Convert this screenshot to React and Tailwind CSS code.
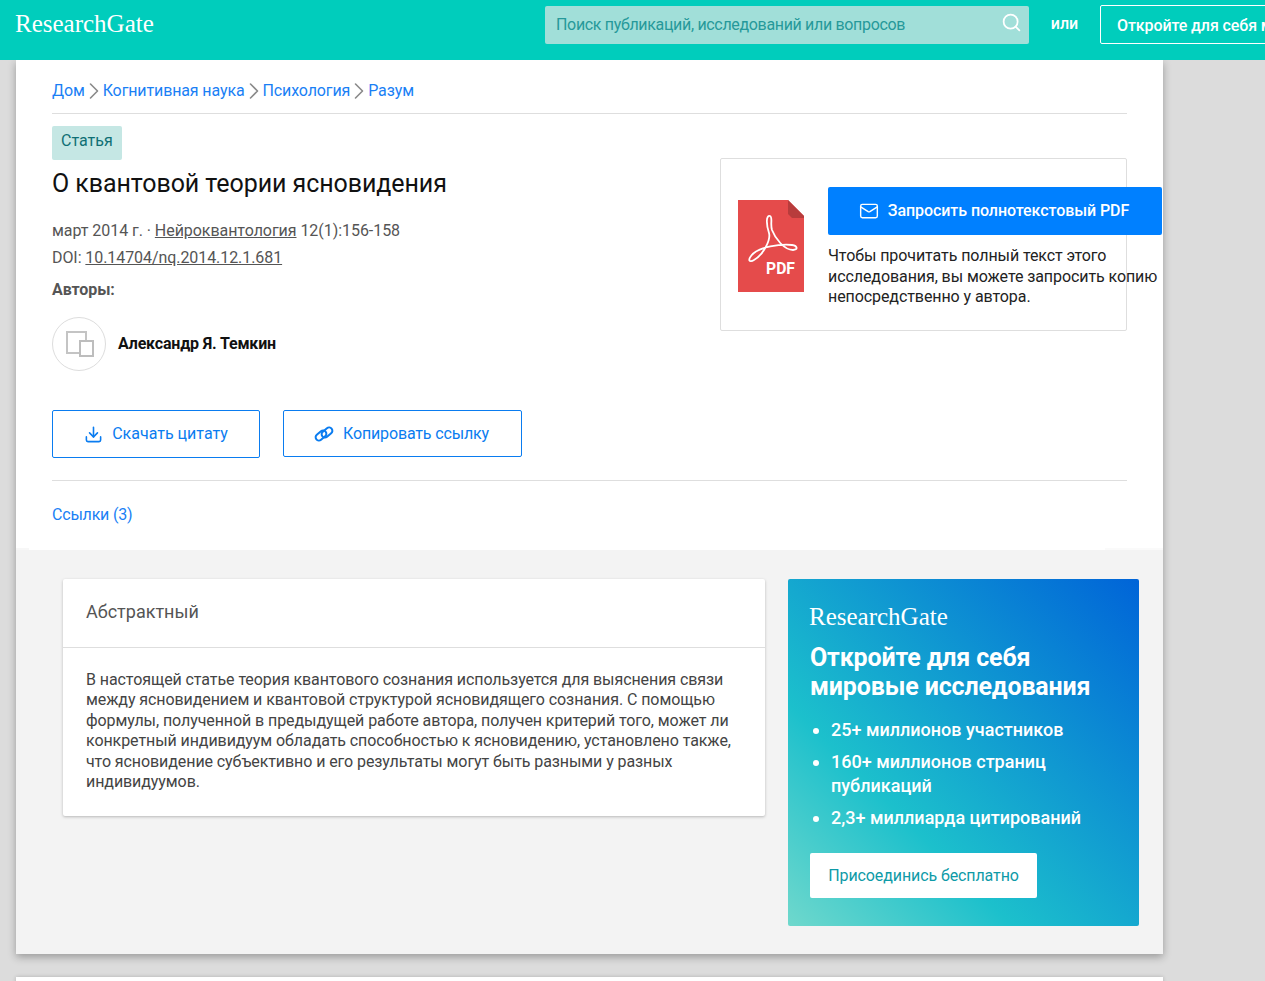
import React from 'react'
import { ChevronRight, Download, Mail, Search } from 'lucide-react'

const crumbs = ['Дом', 'Когнитивная наука', 'Психология', 'Разум']

function PdfIcon() {
  return (
    <svg viewBox="0 0 66 92" className="w-[66px] h-[92px] shrink-0">
      <path d="M0 0H50L66 16V92H0Z" fill="#e54b4b" />
      <path d="M50 0L66 16V18H54L50 14Z" fill="#b83c3c" />
      <path
        d="M32 16C28 15 28 24 31 33C33 40 25 55 16 60C11 63 10 60 13 56C20 46 44 44 54 45C60 46 60 50 55 50C46 50 37 38 34 30C32 24 35 17 32 16Z"
        fill="none"
        stroke="#fff"
        strokeWidth="1.8"
      />
      <text x="28" y="74" fill="#fff" fontSize="17" fontWeight="700" fontFamily="Roboto, sans-serif" textLength="29" lengthAdjust="spacingAndGlyphs">PDF</text>
    </svg>
  )
}

function LinkIcon() {
  return (
    <svg viewBox="0 0 20 20" className="w-5 h-5" fill="none" stroke="#0a7cf0" strokeWidth="2">
      <rect x="1" y="8.2" width="12" height="6.6" rx="3.3" transform="rotate(-40 7 11.5)" />
      <rect x="7" y="5.2" width="12" height="6.6" rx="3.3" transform="rotate(-40 13 8.5)" />
    </svg>
  )
}

function Logo({ className }) {
  return <span className={`font-['Liberation_Serif',serif] text-white ${className}`}>ResearchGate</span>
}

function Header() {
  return (
    <header className="h-[60px] bg-[#00cdbc] flex overflow-hidden relative z-10">
      <div className="w-[545px] shrink-0 pl-[15px] pt-[7px]">
        <Logo className="text-[25px] leading-[34px]" />
      </div>
      <div className="mt-[6px] h-[38px] w-[484px] shrink-0 rounded-[2px] bg-[#a1dfd9] flex items-center justify-between pl-[11px] pr-[7px]">
        <span className="text-[16px] tracking-[-0.33px] text-[#26999a]">Поиск публикаций, исследований или вопросов</span>
        <Search className="w-[21px] h-[21px] -mt-[6px] text-white" strokeWidth={2} />
      </div>
      <span className="w-[71px] shrink-0 pt-[13px] text-center text-[16px] leading-[22px] font-medium text-white">или</span>
      <div className="mt-[5px] h-[39px] w-[260px] shrink-0 rounded-[2px] border border-white pl-[16px] text-[16px] leading-[39px] tracking-[-0.1px] font-medium text-white whitespace-nowrap">
        Откройте для себя мировые
      </div>
    </header>
  )
}

function TopSection() {
  return (
    <section className="relative bg-white px-9 h-[490px]">
      <nav className="pt-[19px] pb-[10px] border-b border-[#dedede] flex items-center text-[16px] leading-6 tracking-[-0.12px] text-[#1a7ff5]">
        {crumbs.map((crumb, index) => (
          <React.Fragment key={crumb}>
            {index > 0 && <ChevronRight className="w-7 h-7 -mx-[5px] -my-[2px] text-[#8a8a8a]" strokeWidth={1.4} />}
            <span>{crumb}</span>
          </React.Fragment>
        ))}
      </nav>

      <div className="flex justify-between h-[367px] border-b border-[#dedede]">
        <div>
          <div className="mt-3 w-[70px] h-[34px] rounded-[2px] bg-[#c5e7e4] pl-[9px] text-[16px] leading-[29px] text-[#0f6f74]">
            Статья
          </div>
          <h1 className="mt-[6px] text-[25px] leading-[36px] tracking-[-0.07px] text-[#111]">О квантовой теории ясновидения</h1>
          <p className="mt-[15px] text-[16px] leading-[27px] tracking-[-0.05px] text-[#555]">
            март 2014 г. · <span className="underline">Нейроквантология</span> 12(1):156-158
          </p>
          <p className="text-[16px] leading-[27px] tracking-[-0.07px] text-[#555]">
            DOI: <span className="underline">10.14704/nq.2014.12.1.681</span>
          </p>
          <p className="mt-[5px] text-[16px] leading-[27px] font-bold tracking-[-0.1px] text-[#555]">Авторы:</p>
          <div className="mt-[14px] flex items-center gap-3">
            <div className="w-[54px] h-[54px] rounded-full border border-[#dddddd] relative">
              <div className="absolute left-[13px] top-[13px] w-[21px] h-[23px] border-2 border-[#c4c4c4]" />
              <div className="absolute left-[26px] top-[22px] w-[15px] h-[17px] border-2 border-[#bdbdbd] bg-white" />
            </div>
            <span className="text-[16px] font-bold tracking-[-0.17px] text-[#111]">Александр Я. Темкин</span>
          </div>
          <div className="mt-[39px] flex gap-[23px] items-start">
            <button className="w-[208px] h-[48px] rounded-[2px] border border-[#0a7cf0] flex items-center justify-center gap-[9px] text-[16px] text-[#0a7cf0]">
              <Download className="w-[19px] h-[19px]" strokeWidth={2} />
              Скачать цитату
            </button>
            <button className="w-[239px] h-[47px] rounded-[2px] border border-[#0a7cf0] flex items-center justify-center gap-[9px] pr-[2px] text-[16px] tracking-[-0.15px] text-[#0a7cf0]">
              <LinkIcon />
              Копировать ссылку
            </button>
          </div>
        </div>

        <div className="mt-[44px] w-[407px] h-[173px] rounded-[2px] border border-[#dedede] flex items-start gap-6 pl-[17px]">
          <div className="mt-[41px]">
            <PdfIcon />
          </div>
          <div className="w-[334px] shrink-0 mt-[28px]">
            <button className="w-[334px] h-[48px] rounded-[2px] bg-[#0080ff] flex items-center justify-center gap-[9px] pr-[2px] text-[16px] tracking-[-0.07px] font-medium text-white">
              <Mail className="w-[20px] h-[20px]" strokeWidth={1.7} />
              Запросить полнотекстовый PDF
            </button>
            <p className="mt-[11px] text-[16px] leading-[20.5px] tracking-[-0.08px] text-[#222]">
              Чтобы прочитать полный текст этого исследования, вы можете запросить копию непосредственно у автора.
            </p>
          </div>
        </div>
      </div>

      <p className="pt-[22px] text-[16px] leading-6 tracking-[-0.2px] text-[#1a7ff5]">Ссылки (3)</p>

      <div className="absolute left-0 bottom-0 w-[13px] h-[2px] bg-[#f7f7f7]" />
      <div className="absolute right-0 bottom-0 w-[58px] h-[2px] bg-[#fafafa]" />
    </section>
  )
}

function AbstractCard() {
  return (
    <div className="w-[702px] h-[237px] bg-white rounded-[2px] shadow-[0_1px_3px_rgba(0,0,0,0.25)]">
      <h2 className="h-[69px] border-b border-[#dedede] pl-[23px] pt-[19px] text-[18px] leading-[28px] text-[#555]">Абстрактный</h2>
      <p className="pt-[22px] px-[23px] text-[16px] leading-[20.4px] tracking-[-0.08px] text-[#444]">
        В настоящей статье теория квантового сознания используется для выяснения связи между ясновидением и квантовой структурой ясновидящего сознания. С помощью формулы, полученной в предыдущей работе автора, получен критерий того, может ли конкретный индивидуум обладать способностью к ясновидению, установлено также, что ясновидение субъективно и его результаты могут быть разными у разных индивидуумов.
      </p>
    </div>
  )
}

function PromoCard() {
  return (
    <div className="w-[351px] h-[347px] rounded-[2px] bg-[linear-gradient(to_top_right,#6fd8cc_0%,#1cc0cc_32%,#0064d8_100%)] pl-[22px] pt-[22px] text-white">
      <Logo className="block -ml-px text-[25px] leading-[32px]" />
      <h3 className="mt-[10px] text-[25px] leading-[29px] font-bold tracking-[-0.15px]">Откройте для себя<br />мировые исследования</h3>
      <ul className="mt-[17px] ml-[21px] w-[290px] list-disc text-[18px] leading-[24px] font-medium">
        <li>25+ миллионов участников</li>
        <li className="mt-2">160+ миллионов страниц публикаций</li>
        <li className="mt-2">2,3+ миллиарда цитирований</li>
      </ul>
      <button className="mt-[23px] w-[227px] h-[45px] rounded-[2px] bg-white text-[16px] tracking-[-0.1px] text-[#0e9aa7]">Присоединись бесплатно</button>
    </div>
  )
}

export default function App() {
  return (
    <div className="h-[981px] overflow-hidden bg-[#dcdcdc] font-['Roboto',sans-serif]">
      <Header />
      <main className="w-[1147px] ml-4">
        <div className="shadow-[0_3px_8px_rgba(0,0,0,0.3)]">
          <TopSection />
          <section className="h-[404px] bg-[#f3f3f3] pl-[47px] pr-6 pt-[29px] flex justify-between items-start">
            <AbstractCard />
            <PromoCard />
          </section>
        </div>
        <div className="mt-[23px] h-20 bg-white shadow-[0_0_4px_rgba(0,0,0,0.2)]" />
      </main>
    </div>
  )
}
